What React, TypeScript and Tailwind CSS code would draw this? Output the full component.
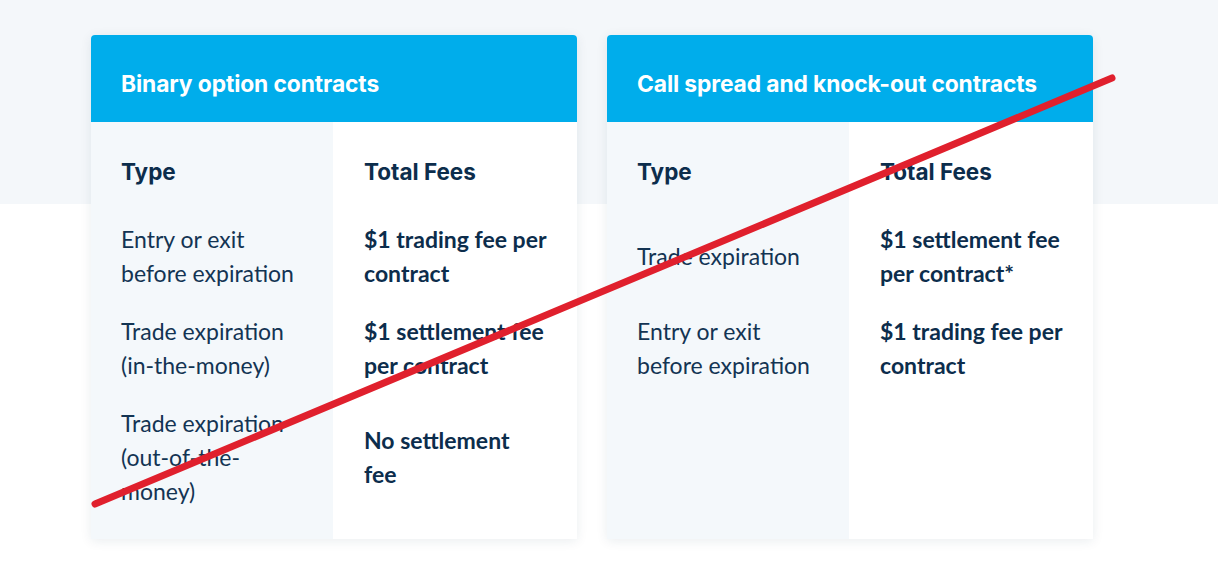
const cards = [
  {
    title: "Binary option contracts",
    rows: [
      ["Entry or exit before expiration", "$1 trading fee per contract"],
      ["Trade expiration (in-the-money)", "$1 settlement fee per contract"],
      ["Trade expiration (out-of-the-money)", "No settlement\nfee"],
    ],
  },
  {
    title: "Call spread and knock-out contracts",
    rows: [
      ["Trade expiration", "$1 settlement fee per contract*"],
      ["Entry or exit before expiration", "$1 trading fee per contract"],
    ],
  },
];

const FeeCard = ({ title, rows }: { title: string; rows: string[][] }) => {
  return (
    <div className="w-[486px] flex flex-col rounded-t bg-white shadow-[0_2px_12px_rgba(20,50,80,0.09)] overflow-hidden">
      <div className="h-[87px] shrink-0 bg-[#00adeb] px-[30px] pt-[12px] flex items-center">
        <h2 className="font-['Inter',sans-serif] font-bold text-[22.8px] text-white tracking-[-0.1px]">
          {title}
        </h2>
      </div>
      <div className="flex-1 pb-[19px] bg-[linear-gradient(to_right,#f4f8fb_242px,#ffffff_242px)]">
        <div className="grid grid-cols-[242px_1fr] content-start">
          <div className="pl-[30px] pr-4 pt-[33px] pb-[21px] font-['Inter',sans-serif] font-bold text-[22.5px] leading-[34px] text-[#0c2d4c]">
            Type
          </div>
          <div className="pl-[31px] pr-4 pt-[33px] pb-[21px] font-['Inter',sans-serif] font-bold text-[22.5px] leading-[34px] text-[#0c2d4c]">
            Total Fees
          </div>
          {rows.map(([type, fee]) => (
            <>
              <div
                key={type + "t"}
                className="pl-[30px] pr-[30px] py-3 flex items-center font-['Lato',sans-serif] text-[23px] leading-[34px] text-[#133453]"
              >
                {type}
              </div>
              <div
                key={type + "f"}
                className="pl-[31px] pr-[14px] py-3 flex items-center whitespace-pre-line font-['Lato',sans-serif] font-bold text-[23px] leading-[34px] text-[#0c2d4c]"
              >
                {fee}
              </div>
            </>
          ))}
        </div>
      </div>
    </div>
  );
};

export default function App() {
  return (
    <div className="relative w-[1218px] h-[564px] overflow-hidden bg-[linear-gradient(to_bottom,#f4f7fa_204px,#ffffff_204px)]">
      <div className="flex gap-[30px] pl-[91px] pt-[35px] items-stretch h-[539px]">
        {cards.map((c) => (
          <FeeCard key={c.title} title={c.title} rows={c.rows} />
        ))}
      </div>
      <svg className="absolute inset-0 pointer-events-none" width="1218" height="564">
        <line x1="95" y1="504" x2="1112" y2="78" stroke="#e0202d" strokeWidth="7" strokeLinecap="round" />
      </svg>
    </div>
  );
}
